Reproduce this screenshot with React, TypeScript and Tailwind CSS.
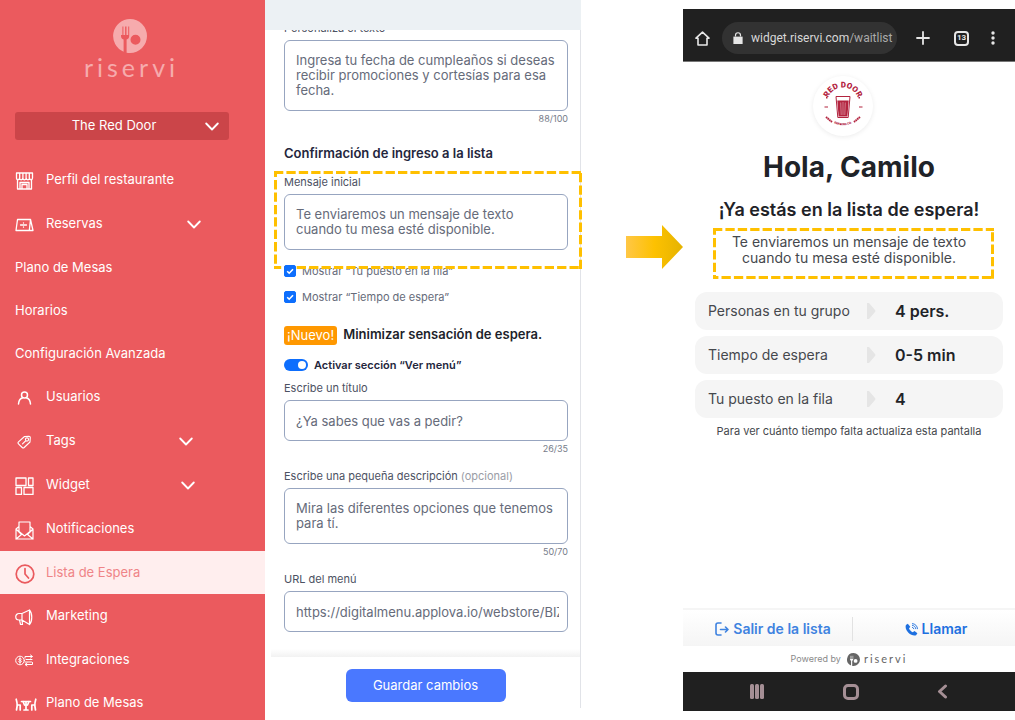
import React from 'react'
import type { ReactNode } from 'react'

function Svg({ w, h, box, stroke = 1.3, children }: { w: number; h: number; box?: string; stroke?: number; children: ReactNode }) {
  return (
    <svg width={w} height={h} viewBox={box ?? `0 0 ${w} ${h}`} fill="none" stroke="currentColor" strokeWidth={stroke} strokeLinecap="round" strokeLinejoin="round" aria-hidden="true" className="shrink-0">
      {children}
    </svg>
  )
}

function Chevron() {
  return (
    <Svg w={14} h={9} stroke={1.8}>
      <path d="M1.2 1.5 7 7.5 12.8 1.5" />
    </Svg>
  )
}

function RiserviMark({ size }: { size: number }) {
  return (
    <svg width={size} height={size} viewBox="0 0 34 34" fill="currentColor" aria-hidden="true" className="shrink-0">
      <path
        fillRule="evenodd"
        d="M17 0a17 17 0 0 1 0 34c-1.2 0-2.3-.1-3.400-.3V20.500c1.700-.6 2.600-1.700 2.600-3.500V7.500h-1V16h-1.700V7.500h-1.400V16h-1.700V7.500H9.400V16H8V17c0 1.800.9 2.900 2.600 3.500v12.200A17 17 0 0 1 17 0Zm5.500 15.800a5 5 0 1 0 0 10 5 5 0 0 0 0-10Z"
      />
    </svg>
  )
}

// dashed outline used to point at the same message on both sides
function Highlight({ className }: { className: string }) {
  return (
    <svg className={`pointer-events-none absolute ${className}`} aria-hidden="true">
      <rect width="100%" height="100%" fill="none" stroke="#ffc000" strokeWidth="6" strokeDasharray="9.300 3.100" />
    </svg>
  )
}

const icons = {
  store: (
    <Svg w={19} h={18}>
      <path d="M1.500 1h16v5c0 1-.6 1.800-1.500 1.800S14.500 7 14.500 6c0 1-.7 1.800-1.600 1.800S11.200 7 11.200 6c0 1-.7 1.800-1.700 1.800S7.800 7 7.800 6c0 1-.7 1.800-1.700 1.800S4.500 7 4.500 6c0 1-.6 1.800-1.500 1.800S1.500 7 1.500 6V1ZM4.700 1v5M7.900 1v5M11.100 1v5M14.300 1v5M2.500 8v9h14V8M5 17v-6.500h9V17M7 17v-4.500h5V17" />
    </Svg>
  ),
  ticket: (
    <Svg w={19} h={14}>
      <path d="M2.500 1.500h13L14.300 12.500H1L2.500 1.500ZM15.500 1.500l2.500 11h-3.700M5.500 7h6M8.500 4.800v.2M8.500 9v.2" />
    </Svg>
  ),
  user: (
    <Svg w={19} h={14} stroke={1.500}>
      <circle cx="9.500" cy="4" r="3" />
      <path d="M3.500 13c.2-3.300 2-5.800 4.300-6.300M15.500 13c-.2-3.300-2-5.800-4.300-6.300" />
    </Svg>
  ),
  tag: (
    <Svg w={19} h={14} stroke={1.100}>
      <path d="M9.500 1.500 14 1.200c.8 0 1.300.5 1.300 1.300L15 7l-5.800 5.500c-.6.600-1.400.6-2 0L3.500 8.800c-.6-.6-.6-1.400 0-2L9.500 1.500Z" />
      <circle cx="12" cy="4.500" r="1.600" />
      <path d="m10.500 6-3 2.800" />
    </Svg>
  ),
  widget: (
    <Svg w={19} h={18}>
      <path d="M1 1h10v7.500H1zM13.500 1H18v7.500h-4.500zM1 10.500h5.500V17.500H1zM9 10.500h9V17.500H9z" />
    </Svg>
  ),
  mail: (
    <Svg w={19} h={19} stroke={1.200}>
      <path d="M4 10V1h11v9M4 5.500 1 8v10h17V8l-3-2.500M1 8l5.500 5.500L1 18M18 8l-5.500 5.500L18 18M4 10.500l5.500 4.500 5.500-4.500" />
    </Svg>
  ),
  clock: (
    <Svg w={20} h={20} stroke={1.700}>
      <circle cx="10" cy="10" r="8.800" />
      <path d="M10 4.500V10l3.500 4" />
    </Svg>
  ),
  horn: (
    <Svg w={19} h={17} stroke={1.200}>
      <path d="M7 4.500H4a3 3 0 0 0 0 6.500h3l7.500 4.500V1L7 4.500ZM7 4.500V11M4.500 11l1 4.500h2L7 11M14.500 1c3 3 3 11.500 0 14.500" />
    </Svg>
  ),
  money: (
    <Svg w={19} h={13} stroke={1}>
      <circle cx="5" cy="6.500" r="4.300" />
      <path d="M6.300 5c-.6-.7-2.500-.6-2.500.4 0 1.200 2.600.8 2.600 2.100 0 1-2 1.100-2.700.3M5 3.700v5.600M10 4V2.500h7M15.500 1l2 1.500-2 1.500M11 5.500h6M10 8h6.500M17.500 8.500v2h-7M12 9l-2 1.500 2 1.500" />
    </Svg>
  ),
  table: (
    <Svg w={22} h={13} stroke={1.700}>
      <path d="M1.200 1.200c.6 2 1 4 1 6.300M2 7h3.200v5M2.200 7.500 1.500 12M20.800 1.200c-.6 2-1 4-1 6.300M20 7h-3.200v5M19.800 7.500l.7 4.500M6.500 3.500h9M8 3.500 9.500 7M14 3.500 12.500 7M11 3.500V12M9 12h4" />
    </Svg>
  ),
}

type Item = { label: string; icon?: keyof typeof icons; row: string; chevron?: string; active?: boolean }

const items: Item[] = [
  { label: 'Perfil del restaurante', icon: 'store', row: 'h-11' },
  { label: 'Reservas', icon: 'ticket', row: 'h-11', chevron: 'mr-16' },
  { label: 'Plano de Mesas', row: 'h-[43px]' },
  { label: 'Horarios', row: 'h-[43px]' },
  { label: 'Configuración Avanzada', row: 'h-[43px]' },
  { label: 'Usuarios', icon: 'user', row: 'h-11' },
  { label: 'Tags', icon: 'tag', row: 'h-11', chevron: 'mr-[72px]' },
  { label: 'Widget', icon: 'widget', row: 'h-11', chevron: 'mr-[70px]' },
  { label: 'Notificaciones', icon: 'mail', row: 'h-11' },
  { label: 'Lista de Espera', icon: 'clock', row: 'h-[43px]', active: true },
  { label: 'Marketing', icon: 'horn', row: 'h-11' },
  { label: 'Integraciones', icon: 'money', row: 'h-[43px]' },
  { label: 'Plano de Mesas', icon: 'table', row: 'h-11' },
]

function Sidebar() {
  return (
    <aside className="flex w-[265px] shrink-0 flex-col overflow-hidden bg-[#eb5a5e] text-white">
      <div className="flex flex-col items-center pt-[19px] pr-[6px] text-[#f6abad]">
        <RiserviMark size={34} />
        <span className="pl-1 font-[Lato] text-[25px] leading-[28px] tracking-[4px]">riservi</span>
      </div>
      <div className="relative mt-[31px] mr-9 ml-[15px]">
        <select aria-label="Restaurante" className="h-7 w-full appearance-none rounded-[3px] bg-[#cb4549] pr-4 text-center text-[13px]">
          <option>The Red Door</option>
        </select>
        <span className="pointer-events-none absolute top-[10px] right-[10px]">
          <Chevron />
        </span>
      </div>
      <nav className="mt-[18px]">
        {items.map((item, i) => (
          <a
            key={i}
            href="#"
            className={`flex items-center pl-[15px] text-[13px] ${item.row} ${item.active ? 'bg-[#ffeeee] text-[#ea5a5e]' : ''}`}
          >
            {item.icon && <span className="flex w-[31px] shrink-0 pt-[2px]">{icons[item.icon]}</span>}
            <span className={item.active ? 'text-[#ef8487]' : ''}>{item.label}</span>
            {item.chevron && (
              <span className={`ml-auto ${item.chevron}`}>
                <Chevron />
              </span>
            )}
          </a>
        ))}
      </nav>
    </aside>
  )
}

const field = 'block w-full resize-none overflow-hidden rounded-md border border-[#97a5c0] bg-white pr-2 pl-[11px] text-[13px] leading-[15px] text-[#666b7a]'
const label = 'mb-1 block h-4 text-[11px] leading-4 text-[#4c5162]'
const counter = 'h-4 text-right text-[9px] leading-4 text-[#777c89]'

function Check({ id, text }: { id: string; text: string }) {
  return (
    <div className="flex h-5 items-center gap-[6px]">
      <span className="relative flex">
        <input id={id} type="checkbox" defaultChecked className="size-3 appearance-none rounded-xs border border-[#0d6efd] checked:bg-[#0d6efd]" />
        <svg viewBox="0 0 12 12" className="pointer-events-none absolute inset-0 size-3" fill="none" stroke="#fff" strokeWidth="1.600" aria-hidden="true">
          <path d="m3.200 6.200 2 2 3.800-4" />
        </svg>
      </span>
      <label htmlFor={id} className="text-[11px] text-[#666b7a]">{text}</label>
    </div>
  )
}

function SettingsForm() {
  return (
    <form className="mb-3 flex w-[316px] shrink-0 flex-col">
      <div className="z-10 h-[30px] shrink-0 bg-[#ecf1f4]" />
      <div className="flex min-h-0 flex-1 flex-col border-r border-[#e1e3e8]">
        <div className="min-h-0 flex-1 overflow-y-clip pr-3 pl-[19px]">
          <div className="-mt-[10px]">
            <label htmlFor="personaliza" className={label}>Personaliza el texto</label>
            <textarea id="personaliza" rows={3} className={`${field} h-[71px] py-3`} defaultValue="Ingresa tu fecha de cumpleaños si deseas recibir promociones y cortesías para esa fecha." />
            <p className={counter}>88/100</p>
          </div>

          <h2 className="mt-4 text-[13px] leading-5 font-semibold text-[#24263c]">Confirmación de ingreso a la lista</h2>
          <div className="relative mt-[11px]">
            <label htmlFor="mensaje" className={label}>Mensaje inicial</label>
            <textarea id="mensaje" rows={2} className={`${field} h-14 py-3`} defaultValue="Te enviaremos un mensaje de texto cuando tu mesa esté disponible." />
            <Highlight className="-top-[3px] -left-[10px] h-[98px] w-[308px]" />
          </div>

          <div className="mt-[11px] flex flex-col gap-[6px]">
            <Check id="puesto" text="Mostrar “Tu puesto en la fila”" />
            <Check id="tiempo" text="Mostrar “Tiempo de espera”" />
          </div>

          <div className="mt-[18px] flex h-5 items-center gap-[6px] text-[13px]">
            <span className="rounded-[3px] bg-[#ff9800] px-[3px] leading-[19px] text-white">¡Nuevo!</span>
            <h2 className="font-semibold text-[#1d1f2b]">Minimizar sensación de espera.</h2>
          </div>
          <div className="mt-[10px] flex h-5 items-center gap-[6px]">
            <span className="relative flex">
              <input id="activar" type="checkbox" role="switch" defaultChecked className="h-3 w-6 appearance-none rounded-full bg-gray-300 checked:bg-[#0d6efd]" />
              <span className="pointer-events-none absolute top-[2px] right-[2px] size-2 rounded-full bg-white" />
            </span>
            <label htmlFor="activar" className="text-[11px] font-semibold text-[#24263c]">Activar sección “Ver menú”</label>
          </div>

          <div className="mt-[5px]">
            <label htmlFor="titulo" className={label}>Escribe un título</label>
            <input id="titulo" className={`${field} h-[41px]`} defaultValue="¿Ya sabes que vas a pedir?" />
            <p className={counter}>26/35</p>
          </div>
          <div className="mt-[11px]">
            <label htmlFor="descripcion" className={label}>
              Escribe una pequeña descripción <span className="text-[#9a9da6]">(opcional)</span>
            </label>
            <textarea id="descripcion" rows={2} className={`${field} h-14 py-3`} defaultValue="Mira las diferentes opciones que tenemos para tí." />
            <p className={counter}>50/70</p>
          </div>
          <div className="mt-[11px]">
            <label htmlFor="url" className={label}>URL del menú</label>
            <input id="url" className={`${field} h-[41px]`} defaultValue="https://digitalmenu.applova.io/webstore/BIZ" />
          </div>
        </div>
        <div className="ml-[6px] h-2 shrink-0 bg-linear-to-b from-white to-[#f2f2f2]" />
        <div className="flex h-[51px] shrink-0 items-start justify-center pt-3 pl-[6px]">
          <button type="button" className="h-[33px] w-40 rounded-md bg-[#4a78ff] text-[13px] text-white">Guardar cambios</button>
        </div>
      </div>
    </form>
  )
}

function Arrow() {
  return (
    <div className="flex w-[102px] shrink-0 justify-end pt-[225px]">
      <svg width="57" height="44" viewBox="0 0 57 44" aria-hidden="true">
        <defs>
          <linearGradient id="gold" x1="0" x2="1">
            <stop offset="0" stopColor="#ffc746" />
            <stop offset=".5" stopColor="#fdc101" />
            <stop offset="1" stopColor="#e5b300" />
          </linearGradient>
        </defs>
        <path d="M0 11h36V0l21 22-21 22V33H0z" fill="url(#gold)" />
      </svg>
    </div>
  )
}

function RedDoorLogo() {
  return (
    <div className="mr-3 size-[60px] rounded-full bg-white shadow-[0_1px_5px_rgba(0,0,0,0.08)]">
      <svg viewBox="0 0 60 60" fill="#b3243f" role="img" aria-label="Red Door Brewing Co.">
        <defs>
          <path id="top" d="M14 27.500a16 16 0 0 1 32 0" />
          <path id="bottom" d="M11.500 36a19.500 19.500 0 0 0 37 0" />
        </defs>
        <text fontFamily="Roboto" fontWeight="900" fontSize="8" textAnchor="middle">
          <textPath href="#top" startOffset="50%">RED DOOR</textPath>
        </text>
        <text fontFamily="Roboto" fontWeight="900" fontSize="3" textAnchor="middle">
          <textPath href="#bottom" startOffset="50%">BREWING CO.</textPath>
        </text>
        <path d="M23 20.500h14L35.200 41.500H24.800z" fill="none" stroke="#b3243f" />
        <path d="M24.300 24.500h11.400l-1.300 16h-8.800z" />
        <path d="M27.700 26.500 28.200 39M30 26v13M32.300 26.500 31.800 39" stroke="#fff" strokeWidth=".4" />
        <path d="M11.500 30.500h3.500v1h-3.500zM46 30.500h3.500v1H46zM13 21h1.500v1.500H13zM45.500 21H47v1.500h-1.500z" />
        <path d="m13 41 6 5M47 41l-6 5" stroke="#b3243f" strokeWidth="2" strokeDasharray="1.600 .5" />
      </svg>
    </div>
  )
}

const info = [
  { name: 'Personas en tu grupo', value: '4 pers.' },
  { name: 'Tiempo de espera', value: '0-5 min' },
  { name: 'Tu puesto en la fila', value: '4' },
]

function BrowserBar() {
  return (
    <div className="flex h-[53px] shrink-0 items-center border-b border-[#777] bg-[#202020] pt-[6px] pl-3 text-[#e6e6e6]">
      <button type="button" aria-label="Inicio">
        <Svg w={15} h={15} stroke={1.600}>
          <path d="M7.500 1.200 1 7.200h2V14h9V7.200h2L7.500 1.200Z" />
        </Svg>
      </button>
      <div className="ml-3 flex h-8 min-w-0 flex-1 items-center gap-2 rounded-full bg-[#323232] pl-[11px]">
        <svg width="10" height="12" viewBox="0 0 10 13" fill="currentColor" aria-hidden="true" className="shrink-0">
          <path d="M0 5h10v8H0z" />
          <path d="M2.300 5V3.500a2.700 2.700 0 0 1 5.400 0V5" fill="none" stroke="currentColor" strokeWidth="1.300" />
        </svg>
        <span className="font-[Roboto] text-xs whitespace-nowrap text-[#d8d8d8]">
          widget.riservi.com<span className="text-[#aaaaaa]">/waitlist</span>
        </span>
      </div>
      <button type="button" aria-label="Nueva pestaña" className="ml-[19px]">
        <Svg w={14} h={14} stroke={1.800}>
          <path d="M7 1v12M1 7h12" />
        </Svg>
      </button>
      <button type="button" className="ml-6 flex size-[15px] items-center justify-center rounded-[4px] border-2 border-current font-[Roboto] text-[8px] leading-none font-bold">13</button>
      <button type="button" aria-label="Menú" className="mr-5 ml-[22px]">
        <svg width="4" height="14" viewBox="0 0 4 14" fill="currentColor" aria-hidden="true">
          <circle cx="2" cy="2" r="1.700" />
          <circle cx="2" cy="7" r="1.700" />
          <circle cx="2" cy="12" r="1.700" />
        </svg>
      </button>
    </div>
  )
}

function Phone() {
  return (
    <main className="mt-[9px] mb-[9px] flex min-w-0 flex-1 flex-col">
      <BrowserBar />
      <div className="flex flex-col items-center px-3 pt-[14px]">
        <RedDoorLogo />
        <h1 className="mt-[13px] text-[28px] leading-9 font-bold text-[#1f2328]">Hola, Camilo</h1>
        <h2 className="mt-[13px] text-lg leading-6 font-semibold text-[#1f2328]">¡Ya estás en la lista de espera!</h2>
        <div className="relative mt-[6px] ml-2 h-[51px] w-[281px] pt-[6px] pr-2 text-center text-sm leading-4 text-[#45484d]">
          <p>
            Te enviaremos un mensaje de texto
            <br />
            cuando tu mesa esté disponible.
          </p>
          <Highlight className="inset-0 size-full" />
        </div>
        <dl className="mt-[13px] flex w-full flex-col gap-[6px]">
          {info.map((row) => (
            <div key={row.name} className="flex h-[38px] items-center rounded-xl bg-[#f5f5f5] pl-[13px]">
              <dt className="w-[158px] text-sm text-[#45484d]">{row.name}</dt>
              <svg width="10" height="16" viewBox="0 0 10 16" fill="#e5e5e5" aria-hidden="true">
                <path d="M1 0h2l6 7q1 1 0 2l-6 7H1z" />
              </svg>
              <dd className="ml-[19px] text-base font-semibold text-[#1f2328]">{row.value}</dd>
            </div>
          ))}
        </dl>
        <p className="mt-[5px] text-[11px] leading-4 text-[#45484d]">Para ver cuánto tiempo falta actualiza esta pantalla</p>
      </div>

      <div className="mt-auto flex h-[38px] shrink-0 items-center border-t-2 border-[#f5f5f5] bg-linear-to-b from-white to-[#f5f5f5] pt-[2px] pl-[11px] text-sm font-semibold">
        <a href="#" className="flex flex-1 items-center justify-center gap-1 text-[#3f83e0]">
          <Svg w={14} h={14} stroke={1.600}>
            <path d="M6 1H3a2 2 0 0 0-2 2v8a2 2 0 0 0 2 2h3M5.500 7.500H13M10.500 5l2.500 2.500-2.500 2.500" />
          </Svg>
          Salir de la lista
        </a>
        <span className="h-6 w-px bg-[#e2e2e2]" />
        <a href="#" className="flex flex-1 items-center justify-center gap-1 pl-1 text-[#1e70e0]">
          <svg width="13" height="13" viewBox="0 0 13 13" fill="currentColor" aria-hidden="true">
            <path d="M2.800.8.900 2c-.9 2 .1 5.300 2.500 7.700S9 13 11.100 12.200l1.300-1.900-2.900-2.200-1.700 1.200C6.400 8.800 4.700 7 4 5.500l1.300-1.700L2.800.8Z" />
            <path d="M7 4.200c1 .2 1.700.9 1.900 1.900M7 2.300c2 .1 3.700 1.800 3.800 3.800M7 .6c3 0 5.500 2.500 5.500 5.500" fill="none" stroke="currentColor" strokeWidth=".9" />
          </svg>
          Llamar
        </a>
      </div>
      <div className="flex h-[26px] shrink-0 items-center justify-center text-[#666]">
        <span className="mr-[6px] text-[9px] text-[#8a8a8a]">Powered by</span>
        <RiserviMark size={13} />
        <span className="ml-1 font-[Lato] text-[11px] tracking-[2px]">riservi</span>
      </div>
      <div className="flex h-[39px] shrink-0 items-center justify-between bg-[#202020] px-[67px] text-[#a58f95]">
        <button type="button" aria-label="Recientes">
          <svg width="14" height="15" viewBox="0 0 14 15" fill="currentColor" aria-hidden="true">
            <rect width="4" height="15" rx="1.500" />
            <rect x="5" width="4" height="15" rx="1.500" />
            <rect x="10" width="4" height="15" rx="1.500" />
          </svg>
        </button>
        <button type="button" aria-label="Inicio" className="size-4 rounded-[5px] border-3 border-current" />
        <button type="button" aria-label="Atrás">
          <Svg w={11} h={15} stroke={3}>
            <path d="M8.500 2 2.500 7.500l6 5.500" />
          </Svg>
        </button>
      </div>
    </main>
  )
}

export default function App() {
  return (
    <div className="flex h-screen min-h-[720px] w-full overflow-hidden bg-white font-[Inter,sans-serif]">
      <Sidebar />
      <SettingsForm />
      <Arrow />
      <Phone />
    </div>
  )
}
